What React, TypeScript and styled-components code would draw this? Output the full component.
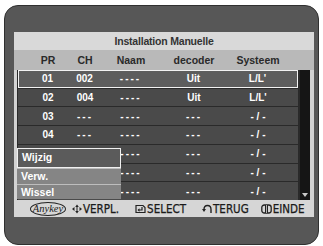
import React from 'react';
import styled, { createGlobalStyle } from 'styled-components';

const GlobalStyle = createGlobalStyle`
  html, body { margin: 0; padding: 0; background: #fff; }
  body { font-family: "Liberation Sans", Arial, sans-serif; }
`;

// Outer TV screen
const Screen = styled.div`
  box-sizing: border-box;
  margin: 5px 0 0 4px;
  width: 315px;
  height: 240px;
  border: 1px solid #303030;
  border-radius: 14px;
  background: #575757;
  padding: 26px 0 0 9px;
`;

const Panel = styled.div`
  width: 300px;
  background: #d3d3d3;
  display: flex;
  flex-direction: column;
`;

const Title = styled.div`
  height: 18px;
  line-height: 18px;
  text-align: center;
  font-size: 10.5px;
  font-weight: bold;
  color: #333;
  background: #d9d9d9;
  letter-spacing: -0.2px;
`;

const cols = '36px 38px 54px 72px 56px';

const HeaderRow = styled.div`
  height: 20px;
  display: grid;
  grid-template-columns: ${cols};
  align-items: center;
  padding-left: 16px;
  background: #b9b9b9;
  font-size: 10.5px;
  font-weight: bold;
  color: #2a2a2a;
`;

const Cell = styled.div`
  text-align: center;
  white-space: nowrap;
`;

const Body = styled.div`
  display: flex;
  height: 130px;
  padding: 0 4px 0 3px;
`;

const Table = styled.div`
  position: relative;
  flex: 1;
  display: grid;
  grid-template-rows: repeat(7, 1fr);
  row-gap: 1px;
  background: #2a2a2a;
`;

const Row = styled.div<{ $active?: boolean }>`
  box-sizing: border-box;
  margin: 0 2px 0 1px;
  display: grid;
  grid-template-columns: ${cols};
  align-items: center;
  padding-left: ${({ $active }) => ($active ? '10.5px' : '12px')};
  background: ${({ $active }) => ($active ? '#5d5d5d' : '#4a4a4a')};
  border: ${({ $active }) => ($active ? '1.5px solid #f2f2f2' : 'none')};
  color: #fff;
  font-size: 10px;
  font-weight: bold;
`;

const Dash = styled.span`
  letter-spacing: 2px;
`;

const Scrollbar = styled.div`
  width: 10px;
  background: #151515;
  display: flex;
  align-items: flex-end;
  justify-content: center;
  padding-bottom: 3px;
  box-sizing: border-box;
`;

const ScrollArrow = styled.div`
  width: 0;
  height: 0;
  border-left: 3px solid transparent;
  border-right: 3px solid transparent;
  border-top: 4px solid #c8c8c8;
`;

// Popup menu over the table
const Menu = styled.div`
  position: absolute;
  left: 0;
  top: 78px;
  width: 104px;
  display: flex;
  flex-direction: column;
  background: #858585;
`;

const MenuItem = styled.div<{ $active?: boolean }>`
  box-sizing: border-box;
  height: ${({ $active }) => ($active ? '20px' : '15.5px')};
  line-height: ${({ $active }) => ($active ? '17px' : '15px')};
  padding-left: 4px;
  border: ${({ $active }) => ($active ? '1.5px solid #f0f0f0' : 'none')};
  border-top: ${({ $active }) => ($active ? '1.5px solid #f0f0f0' : '1px solid #bdbdbd')};
  background: ${({ $active }) => ($active ? '#5b5b5b' : '#858585')};
  color: #fff;
  font-size: 10.5px;
  font-weight: bold;
`;

const Footer = styled.div`
  height: 17px;
  display: flex;
  align-items: center;
  padding-left: 16px;
  background: #d6d6d6;
  color: #1a1a1a;
  font-family: "Liberation Sans Narrow", "DejaVu Sans Condensed", "Liberation Sans", sans-serif;
  font-size: 11.5px;
  -webkit-text-stroke: 0.25px #1a1a1a;
`;

const Key = styled.span`
  display: inline-block;
  box-sizing: border-box;
  width: 36px;
  height: 14px;
  line-height: 12px;
  text-align: center;
  border: 1px solid #222;
  border-radius: 50%;
  font-family: "Liberation Serif", serif;
  font-style: italic;
  font-size: 10.5px;
  -webkit-text-stroke: 0;
`;

const Legend = styled.span<{ $space: number }>`
  display: inline-flex;
  align-items: center;
  margin-left: ${({ $space }) => $space}px;
  svg { margin-right: 1px; }
`;

const MoveIcon = () => (
  <svg width="10" height="10" viewBox="0 0 10 10">
    <polygon points="0,5 2.5,3 2.5,7" fill="#222" />
    <polygon points="5,0.5 3.2,3 6.8,3" fill="#222" />
    <polygon points="5,9.5 3.2,7 6.8,7" fill="#222" />
    <line x1="5" y1="3" x2="5" y2="7" stroke="#222" strokeWidth="1" />
    <polygon points="10,5 7.5,3 7.5,7" fill="#222" />
  </svg>
);

const SelectIcon = () => (
  <svg width="11" height="10" viewBox="0 0 11 10">
    <path d="M1 1.5 H8 L10 3.5 V8.5 H1 Z" fill="none" stroke="#222" strokeWidth="1.2" />
    <path d="M7 3 V6 H3.5" fill="none" stroke="#222" strokeWidth="1.2" />
    <polygon points="2.5,6 4.5,4.3 4.5,7.7" fill="#222" />
  </svg>
);

const BackIcon = () => (
  <svg width="10" height="10" viewBox="0 0 10 10">
    <path d="M2 5.5 Q2 1.5 5.5 1.5 Q9 1.5 9 5.5 V9" fill="none" stroke="#222" strokeWidth="1.4" />
    <polygon points="0,5 4,5 2,8" fill="#222" />
  </svg>
);

const ExitIcon = () => (
  <svg width="11" height="10" viewBox="0 0 11 10">
    <rect x="0.8" y="1" width="9.4" height="8" rx="2.5" fill="none" stroke="#222" strokeWidth="1.3" />
    <rect x="4" y="1" width="3" height="8" fill="#222" />
    <line x1="5.5" y1="1" x2="5.5" y2="9" stroke="#d6d6d6" strokeWidth="0.8" />
  </svg>
);

// rows 05-07 have their PR hidden under the popup menu
const rows = [
  { pr: '01', ch: '002', dec: 'Uit', sys: "L/L'" },
  { pr: '02', ch: '004', dec: 'Uit', sys: "L/L'" },
  { pr: '03', ch: '---', dec: '---', sys: '- / -' },
  { pr: '04', ch: '---', dec: '---', sys: '- / -' },
  { pr: '', ch: '', dec: '---', sys: '- / -' },
  { pr: '', ch: '', dec: '---', sys: '- / -' },
  { pr: '', ch: '', dec: '---', sys: '- / -' },
];

export default function App() {
  return (
    <>
      <GlobalStyle />
      <Screen>
        <Panel>
          <Title>Installation Manuelle</Title>
          <HeaderRow>
            <Cell>PR</Cell>
            <Cell>CH</Cell>
            <Cell>Naam</Cell>
            <Cell>decoder</Cell>
            <Cell>Systeem</Cell>
          </HeaderRow>
          <Body>
            <Table>
              {rows.map((r, i) => (
                <Row key={i} $active={i === 0}>
                  <Cell>{r.pr}</Cell>
                  <Cell>{r.ch === '---' ? <Dash>{r.ch}</Dash> : r.ch}</Cell>
                  <Cell><Dash>----</Dash></Cell>
                  <Cell>{r.dec === '---' ? <Dash>{r.dec}</Dash> : r.dec}</Cell>
                  <Cell>{r.sys}</Cell>
                </Row>
              ))}
              <Menu>
                <MenuItem $active>Wijzig</MenuItem>
                <MenuItem>Verw.</MenuItem>
                <MenuItem>Wissel</MenuItem>
              </Menu>
            </Table>
            <Scrollbar>
              <ScrollArrow />
            </Scrollbar>
          </Body>
          <Footer>
            <Key>Anykey</Key>
            <Legend $space={6}><MoveIcon />VERPL.</Legend>
            <Legend $space={16}><SelectIcon />SELECT</Legend>
            <Legend $space={16}><BackIcon />TERUG</Legend>
            <Legend $space={12}><ExitIcon />EINDE</Legend>
          </Footer>
        </Panel>
      </Screen>
    </>
  );
}
